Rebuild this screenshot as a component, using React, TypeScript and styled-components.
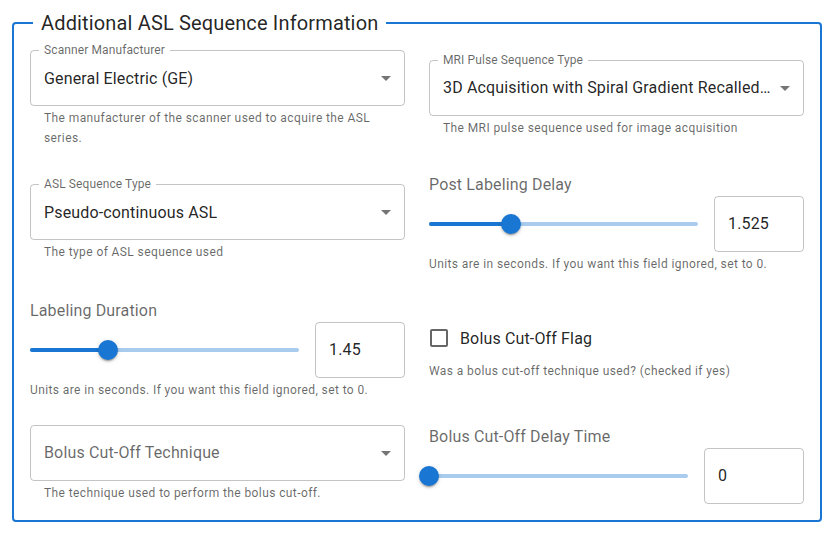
import styled, { createGlobalStyle } from "styled-components";

/* ── Theme values ── */
const primary = "#1976d2";
const textPrimary = "rgba(0, 0, 0, 0.87)";
const textSecondary = "rgba(0, 0, 0, 0.6)";
const outline = "rgba(0, 0, 0, 0.23)";

const GlobalStyle = createGlobalStyle`
  body {
    margin: 0;
    font-family: Roboto, "Helvetica Neue", Arial, sans-serif;
    background: #fff;
  }
`;

/* ── Layout ── */
const Page = styled.div`
  padding: 7px 10px 12px 12px;
`;

const Fieldset = styled.fieldset`
  margin: 0;
  padding: 11px 16px 16px;
  border: 2px solid ${primary};
  border-radius: 4px;
  min-width: 0;
`;

const Legend = styled.legend`
  margin-left: 3px;
  padding: 0 8px;
  font-size: 20px;
  line-height: 32px;
  font-weight: 400;
  letter-spacing: 0.15px;
  color: ${textPrimary};
`;

const FormGrid = styled.div`
  display: grid;
  grid-template-columns: 1fr 1fr;
  column-gap: 24px;
  row-gap: 24px;
  align-items: center;
`;

const Field = styled.div`
  display: flex;
  flex-direction: column;
  min-width: 0;
`;

/* ── Select ── */
const SelectBox = styled.div`
  position: relative;
  height: 56px;
  box-sizing: border-box;
  border: 1px solid ${outline};
  border-radius: 4px;
  display: flex;
  align-items: center;
  padding: 0 32px 0 13px;
`;

const NotchLabel = styled.span`
  position: absolute;
  top: -8px;
  left: 8px;
  padding: 0 5px;
  background: #fff;
  font-size: 12px;
  line-height: 15px;
  letter-spacing: 0.11px;
  color: ${textSecondary};
  white-space: nowrap;
`;

const SelectValue = styled.span<{ $placeholder?: boolean }>`
  font-size: 16px;
  line-height: 23px;
  letter-spacing: 0.15px;
  color: ${(p) => (p.$placeholder ? textSecondary : textPrimary)};
  white-space: nowrap;
  overflow: hidden;
  text-overflow: ellipsis;
`;

const DropIcon = styled.svg`
  position: absolute;
  right: 6px;
  top: 50%;
  margin-top: -12px;
  width: 24px;
  height: 24px;
  fill: rgba(0, 0, 0, 0.54);
`;

const HelperText = styled.p<{ $inset?: boolean }>`
  margin: 3px ${(p) => (p.$inset ? "14px" : "0")} 0;
  font-size: 12px;
  line-height: 19.92px;
  letter-spacing: 0.4px;
  color: ${textSecondary};
`;

/* ── Slider ── */
const SliderLabel = styled.div`
  font-size: 16px;
  line-height: 23px;
  letter-spacing: 0.15px;
  color: ${textSecondary};
`;

const SliderRow = styled.div`
  display: flex;
  align-items: center;
  gap: 16px;
`;

const Rail = styled.div`
  position: relative;
  flex: 1;
  height: 4px;
  border-radius: 2px;
  background: rgba(25, 118, 210, 0.38);
`;

const Track = styled.div`
  position: absolute;
  left: 0;
  top: 0;
  height: 4px;
  border-radius: 2px;
  background: ${primary};
`;

const Thumb = styled.div`
  position: absolute;
  top: 50%;
  width: 20px;
  height: 20px;
  margin: -10px 0 0 -10px;
  border-radius: 50%;
  background: ${primary};
  box-shadow: 0 3px 1px -2px rgba(0, 0, 0, 0.2), 0 2px 2px 0 rgba(0, 0, 0, 0.14),
    0 1px 5px 0 rgba(0, 0, 0, 0.12);
`;

const NumberBox = styled.div<{ $width: number }>`
  width: ${(p) => p.$width}px;
  height: 56px;
  box-sizing: border-box;
  flex-shrink: 0;
  border: 1px solid ${outline};
  border-radius: 4px;
  padding: 0 13px;
  display: flex;
  align-items: center;
  font-size: 16px;
  letter-spacing: 0.15px;
  color: ${textPrimary};
`;

/* ── Checkbox ── */
const CheckRow = styled.label`
  display: flex;
  align-items: center;
  margin-left: -11px;
  font-size: 16px;
  letter-spacing: 0.15px;
  color: ${textPrimary};
`;

const CheckIcon = styled.span`
  display: flex;
  padding: 9px;

  svg {
    width: 24px;
    height: 24px;
    fill: ${textSecondary};
  }
`;

/* ── Parts ── */
const SelectField = ({
  label,
  value,
  helper,
}: {
  label?: string;
  value: string;
  helper: string;
}) => (
  <Field>
    <SelectBox>
      {label && <NotchLabel>{label}</NotchLabel>}
      <SelectValue $placeholder={!label}>{value}</SelectValue>
      <DropIcon viewBox="0 0 24 24">
        <path d="M7 10l5 5 5-5z" />
      </DropIcon>
    </SelectBox>
    <HelperText $inset>{helper}</HelperText>
  </Field>
);

const SliderField = ({
  label,
  value,
  percent,
  boxWidth,
  helper,
}: {
  label: string;
  value: string;
  percent: number;
  boxWidth: number;
  helper?: string;
}) => (
  <Field>
    <SliderLabel>{label}</SliderLabel>
    <SliderRow>
      <Rail>
        <Track style={{ width: `${percent}%` }} />
        <Thumb style={{ left: `${percent}%` }} />
      </Rail>
      <NumberBox $width={boxWidth}>{value}</NumberBox>
    </SliderRow>
    {helper && <HelperText>{helper}</HelperText>}
  </Field>
);

export default function App() {
  return (
    <Page>
      <GlobalStyle />
      <Fieldset>
        <Legend>Additional ASL Sequence Information</Legend>
        <FormGrid>
          <SelectField
            label="Scanner Manufacturer"
            value="General Electric (GE)"
            helper="The manufacturer of the scanner used to acquire the ASL series."
          />
          <SelectField
            label="MRI Pulse Sequence Type"
            value="3D Acquisition with Spiral Gradient Recalled Echo Readout"
            helper="The MRI pulse sequence used for image acquisition"
          />

          <SelectField
            label="ASL Sequence Type"
            value="Pseudo-continuous ASL"
            helper="The type of ASL sequence used"
          />
          <SliderField
            label="Post Labeling Delay"
            value="1.525"
            percent={30.5}
            boxWidth={90}
            helper="Units are in seconds. If you want this field ignored, set to 0."
          />

          <SliderField
            label="Labeling Duration"
            value="1.45"
            percent={29}
            boxWidth={90}
            helper="Units are in seconds. If you want this field ignored, set to 0."
          />
          <Field>
            <CheckRow>
              <CheckIcon>
                <svg viewBox="0 0 24 24">
                  <path d="M19 5v14H5V5h14m0-2H5c-1.11 0-2 .9-2 2v14c0 1.1.89 2 2 2h14c1.1 0 2-.9 2-2V5c0-1.1-.9-2-2-2z" />
                </svg>
              </CheckIcon>
              Bolus Cut-Off Flag
            </CheckRow>
            <HelperText>Was a bolus cut-off technique used? (checked if yes)</HelperText>
          </Field>

          <SelectField
            value="Bolus Cut-Off Technique"
            helper="The technique used to perform the bolus cut-off."
          />
          <SliderField
            label="Bolus Cut-Off Delay Time"
            value="0"
            percent={0}
            boxWidth={100}
          />
        </FormGrid>
      </Fieldset>
    </Page>
  );
}
